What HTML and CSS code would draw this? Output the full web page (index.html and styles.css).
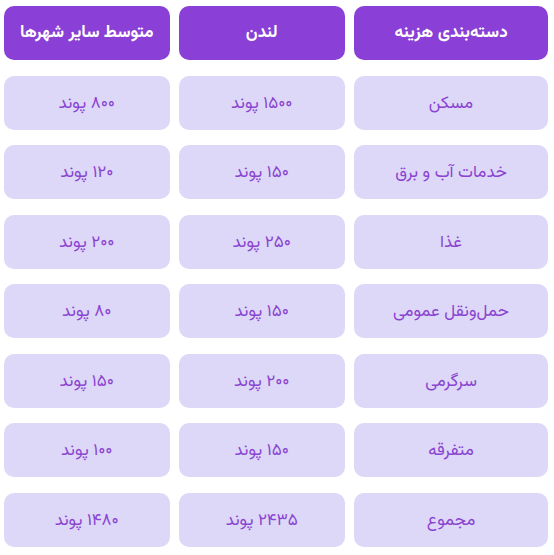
FILE: index.html
```html
<!DOCTYPE html>
<html lang="fa" dir="rtl">
<head>
<meta charset="utf-8">
<link rel="stylesheet" href="styles.css">
</head>
<body>
<div class="table">
  <div class="cell head">دسته‌بندی هزینه</div>
  <div class="cell head">لندن</div>
  <div class="cell head">متوسط سایر شهرها</div>

  <div class="cell">مسکن</div>
  <div class="cell">۱۵۰۰ پوند</div>
  <div class="cell">۸۰۰ پوند</div>

  <div class="cell">خدمات آب و برق</div>
  <div class="cell">۱۵۰ پوند</div>
  <div class="cell">۱۲۰ پوند</div>

  <div class="cell">غذا</div>
  <div class="cell">۲۵۰ پوند</div>
  <div class="cell">۲۰۰ پوند</div>

  <div class="cell">حمل‌ونقل عمومی</div>
  <div class="cell">۱۵۰ پوند</div>
  <div class="cell">۸۰ پوند</div>

  <div class="cell">سرگرمی</div>
  <div class="cell">۲۰۰ پوند</div>
  <div class="cell">۱۵۰ پوند</div>

  <div class="cell">متفرقه</div>
  <div class="cell">۱۵۰ پوند</div>
  <div class="cell">۱۰۰ پوند</div>

  <div class="cell">مجموع</div>
  <div class="cell">۲۴۳۵ پوند</div>
  <div class="cell">۱۴۸۰ پوند</div>
</div>
</body>
</html>
```

FILE: styles.css
```css
html, body {
  margin: 0;
  background: #ffffff;
}
body {
  padding: 6px 6px 0 4px;
  font-family: "Vazirmatn", "DejaVu Sans", sans-serif;
  direction: rtl;
}
.table {
  display: grid;
  grid-template-columns: 194px 165.5px 165.5px;
  grid-auto-rows: 54px;
  column-gap: 9.5px;
  row-gap: 15.5px;
}
.cell {
  display: flex;
  align-items: center;
  justify-content: center;
  padding-top: 2px;
  background: #ddd7f8;
  color: #8a44d0;
  border-radius: 10px;
  font-size: 17px;
  font-weight: 400;
}
.head {
  padding-top: 0;
  background: #8a3fd6;
  color: #ffffff;
  font-weight: bold;
}
```
